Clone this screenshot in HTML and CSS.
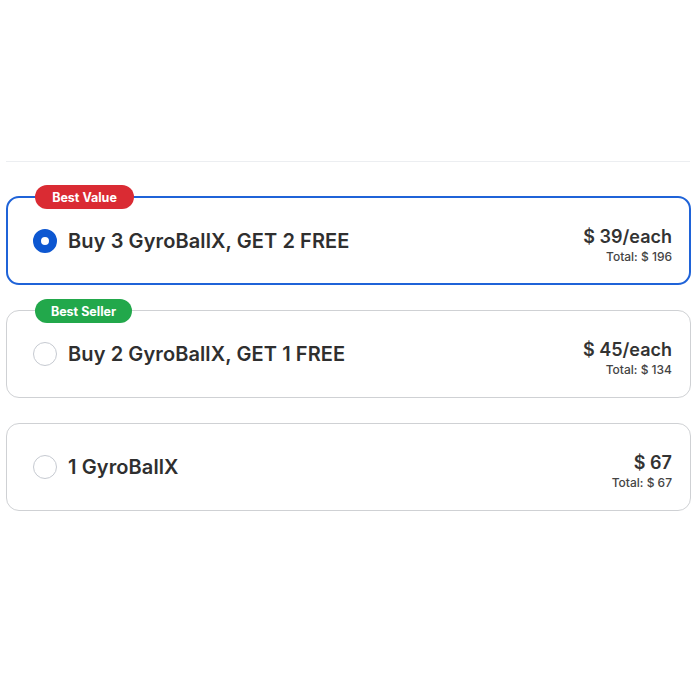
FILE: index.html
```html
<!DOCTYPE html>
<html>
<head>
<meta charset="utf-8">
<link rel="stylesheet" href="styles.css">
</head>
<body>
<div class="page">
  <div class="divider"></div>
  <div class="options">
    <div class="card selected">
      <span class="badge red">Best Value</span>
      <div class="left">
        <span class="radio on"></span>
        <span class="title">Buy 3 GyroBallX, GET 2 FREE</span>
      </div>
      <div class="price">
        <div class="each">$ 39/each</div>
        <div class="total">Total: $ 196</div>
      </div>
    </div>
    <div class="card">
      <span class="badge green">Best Seller</span>
      <div class="left">
        <span class="radio"></span>
        <span class="title">Buy 2 GyroBallX, GET 1 FREE</span>
      </div>
      <div class="price">
        <div class="each">$ 45/each</div>
        <div class="total">Total: $ 134</div>
      </div>
    </div>
    <div class="card">
      <div class="left">
        <span class="radio"></span>
        <span class="title">1 GyroBallX</span>
      </div>
      <div class="price">
        <div class="each">$ 67</div>
        <div class="total">Total: $ 67</div>
      </div>
    </div>
  </div>
</div>
</body>
</html>
```
FILE: styles.css
```css
* { box-sizing: border-box; }
html, body { margin: 0; padding: 0; background: #fff; }
body { font-family: Inter, "Liberation Sans", sans-serif; color: #333; }
.page { padding: 161px 9px 0 6px; }
.divider { height: 1px; background: #eceef1; margin-right: 1px; }
.options { display: flex; flex-direction: column; gap: 25px; margin-top: 34px; }
.card {
  position: relative;
  display: flex;
  align-items: center;
  justify-content: space-between;
  height: 88px;
  border: 1px solid #cfd1d4;
  border-radius: 13px;
  padding: 0 18px 0 26px;
}
.card.selected {
  height: 89px;
  border: 2px solid #1f63d8;
  padding: 0 17px 0 25px;
}
.badge {
  position: absolute;
  left: 28px;
  top: -12px;
  height: 24px;
  border-radius: 12px;
  color: #fff;
  font-size: 12.5px;
  font-weight: 700;
  display: flex;
  align-items: center;
  justify-content: center;
}
.card.selected .badge { left: 27px; top: -13px; }
.badge.red { background: #da2b33; width: 99px; }
.badge.green { background: #22a84b; width: 97px; }
.left { display: flex; align-items: center; gap: 11px; }
.radio {
  width: 24px; height: 24px;
  border-radius: 50%;
  border: 1px solid #c6cad1;
  background: #fff;
  flex: none;
}
.radio.on { border: 8px solid #0d57d1; }
.title { font-size: 20px; font-weight: 600; color: #2f2f2f; letter-spacing: 0.1px; }
.price { display: flex; flex-direction: column; align-items: flex-end; padding-top: 9px; }
.each { font-size: 18px; font-weight: 600; color: #333; line-height: 22px; }
.total { font-size: 12px; font-weight: 500; color: #444; line-height: 16px; margin-top: 1px; }
```
